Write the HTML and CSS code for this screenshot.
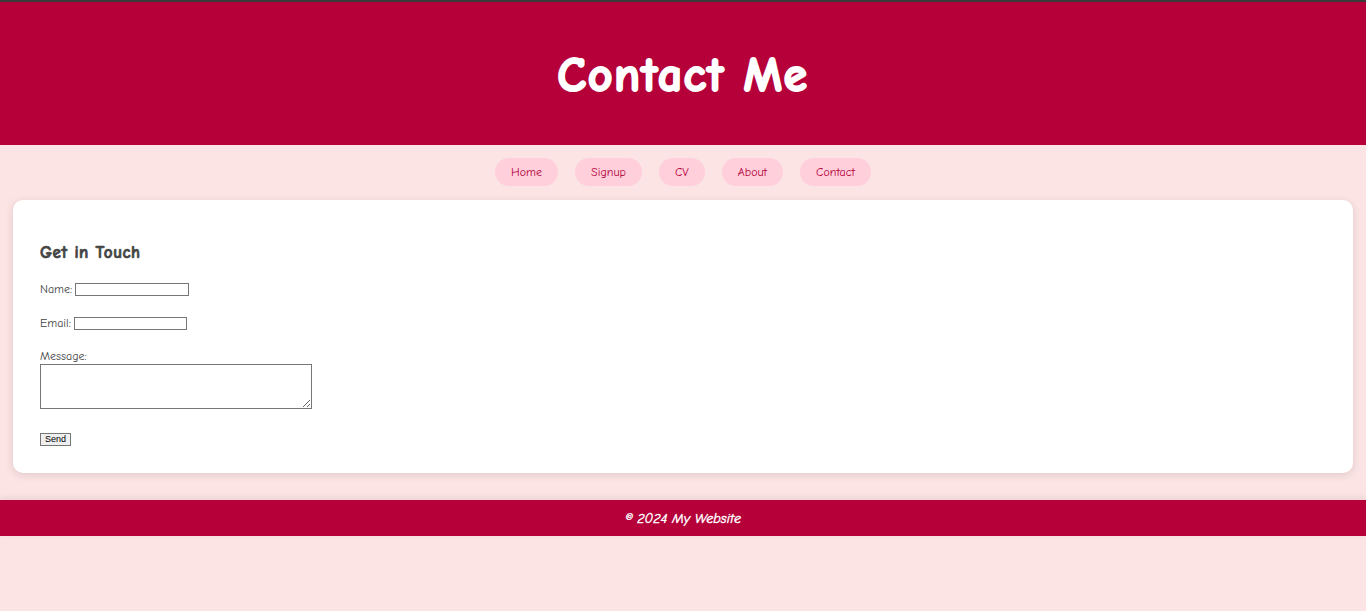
FILE: index.html
```html
<!DOCTYPE html>
<html lang="en">
<head>
<meta charset="utf-8">
<title>Contact Me</title>
<link rel="stylesheet" href="styles.css">
</head>
<body>
<header class="site-header">
  <h1 class="site-title">Contact Me</h1>
</header>
<nav class="site-nav">
  <a class="nav-pill" href="#">Home</a>
  <a class="nav-pill" href="#">Signup</a>
  <a class="nav-pill" href="#">CV</a>
  <a class="nav-pill" href="#">About</a>
  <a class="nav-pill" href="#">Contact</a>
</nav>
<main class="card">
  <h2 class="card-title">Get in Touch</h2>
  <form class="contact-form">
    <div class="row"><label>Name:</label><input class="field" type="text"></div>
    <div class="row"><label>Email:</label><input class="field field-email" type="email"></div>
    <div class="row-msg"><label class="msg-label">Message:</label><textarea class="msg"></textarea></div>
    <button class="send" type="button">Send</button>
  </form>
</main>
<footer class="site-footer">© 2024 My Website</footer>
</body>
</html>
```
FILE: styles.css
```css
* { box-sizing: border-box; }
html, body { margin: 0; padding: 0; }
body {
  background: #fde4e4;
  font-family: "Comic Sans MS", "Comic Neue", "Noto Sans", sans-serif;
  color: #555;
  border-top: 2px solid #3a3a3a;
  min-height: 609px;
}
.site-header {
  background: #b5003a;
  height: 143px;
  display: flex;
  align-items: center;
  justify-content: center;
}
.site-title {
  margin: 0;
  color: #fff;
  font-size: 48px;
  font-weight: bold;
  letter-spacing: 1.5px;
  line-height: 56px;
  padding-top: 4px;
  -webkit-text-stroke: 2px #fff;
}
.site-nav {
  display: flex;
  justify-content: center;
  gap: 17px;
  margin-top: 13px;
}
.nav-pill {
  display: inline-flex;
  align-items: center;
  height: 28px;
  padding: 0 16px;
  border-radius: 14px;
  background: #ffcfdb;
  color: #b5003a;
  text-decoration: none;
  font-size: 12px;
}
.card {
  margin: 14px 13px 0;
  background: #fff;
  border-radius: 10px;
  box-shadow: 0 2px 8px rgba(0,0,0,0.12);
  padding: 40px 27px 27px;
  height: 273px;
}
.card-title {
  margin: 0 0 15px;
  font-size: 17px;
  line-height: 26px;
  color: #444;
  font-weight: bold;
  letter-spacing: 0.6px;
  -webkit-text-stroke: 0.7px #444;
}
.contact-form { font-size: 12px; color: #444; }
.row {
  height: 16px;
  display: flex;
  align-items: center;
  gap: 3px;
  margin-bottom: 18px;
}
.field {
  width: 114px;
  height: 13px;
  border: 1px solid #767676;
  padding: 0;
  margin: 0;
  font-size: 10px;
}
.field-email { width: 113px; }
.row-msg { display: flex; flex-direction: column; }
.msg-label { line-height: 14px; }
.msg {
  width: 272px;
  height: 45px;
  border: 1px solid #767676;
  margin: 1px 0 0;
  padding: 1px;
  resize: both;
}
.send {
  margin-top: 24px;
  width: 31px;
  height: 13px;
  padding: 0;
  font-size: 9px;
  line-height: 11px;
  background: #efefef;
  border: 1px solid #767676;
  color: #000;
  font-family: "Liberation Sans", sans-serif;
}
.site-footer {
  margin-top: 27px;
  background: #b5003a;
  color: #fff;
  height: 36px;
  display: flex;
  align-items: center;
  justify-content: center;
  font-style: italic;
  font-size: 14px;
  -webkit-text-stroke: 0.4px #fff;
  box-shadow: 0 -2px 6px rgba(0,0,0,0.08);
}
```
